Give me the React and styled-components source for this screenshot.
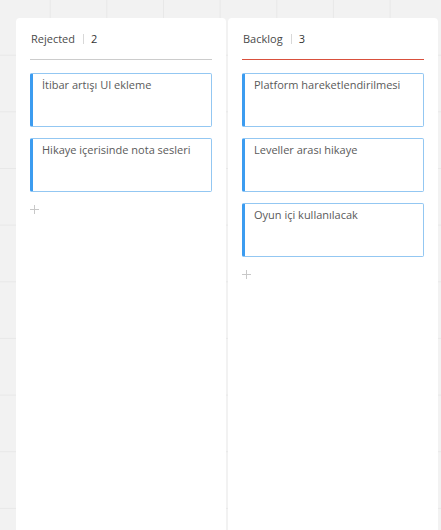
import React from "react";
import styled, { createGlobalStyle } from "styled-components";

const GlobalStyle = createGlobalStyle`
  html, body {
    margin: 0;
    padding: 0;
    height: 100%;
  }
  body {
    font-family: "Open Sans", "Noto Sans", sans-serif;
    background-color: #f2f2f2;
    background-image:
      linear-gradient(to right, #e8e8e8 1px, transparent 1px),
      linear-gradient(to bottom, #e8e8e8 1px, transparent 1px);
    background-size: 56.67px 56.67px;
    background-position: -7px -2px;
    overflow: hidden;
  }
`;

const Board = styled.div`
  display: flex;
  gap: 2px;
  padding: 18px 0 0 16px;
  height: 100vh;
  box-sizing: border-box;
`;

const Column = styled.div`
  width: 210px;
  flex: none;
  background: #ffffff;
  border-radius: 4px 4px 0 0;
  padding: 0 14px;
  box-sizing: border-box;
  display: flex;
  flex-direction: column;
`;

const Header = styled.div`
  height: 42px;
  box-sizing: border-box;
  padding-top: 0;
  display: flex;
  align-items: center;
  font-size: 11px;
  color: #4a4a4a;
  border-bottom: 1px solid ${(p) => p.$line};
  margin-bottom: 13px;
  padding-left: 1px;
`;

const Sep = styled.span`
  width: 1px;
  height: 10px;
  background: #d8d8d8;
  margin: 0 7px 0 8px;
`;

const Count = styled.span`
  color: #333;
`;

const Card = styled.div`
  height: 54px;
  box-sizing: border-box;
  border: 1px solid #93c7f2;
  border-left: 3px solid #3c9cf0;
  border-radius: 2px;
  margin-bottom: 11px;
  padding: 3px 8px 0 9px;
  font-size: 11px;
  line-height: 16px;
  color: #5a5a5a;
`;

const AddButton = styled.div`
  width: 9px;
  height: 9px;
  margin: 2px 0 0 0;
  display: flex;
`;

const Plus = () => (
  <AddButton>
    <svg width="9" height="9" viewBox="0 0 9 9">
      <path d="M4.5 0v9M0 4.5h9" stroke="#c8c8c8" strokeWidth="1" />
    </svg>
  </AddButton>
);

const columns = [
  {
    title: "Rejected",
    line: "#cccccc",
    cards: ["İtibar artışı UI ekleme", "Hikaye içerisinde nota sesleri"],
  },
  {
    title: "Backlog",
    line: "#d9503d",
    cards: [
      "Platform hareketlendirilmesi",
      "Leveller arası hikaye",
      "Oyun içi kullanılacak",
    ],
  },
];

export default function App() {
  return (
    <>
      <GlobalStyle />
      <Board>
        {columns.map((c) => (
          <Column key={c.title}>
            <Header $line={c.line}>
              {c.title}
              <Sep />
              <Count>{c.cards.length}</Count>
            </Header>
            {c.cards.map((t) => (
              <Card key={t}>{t}</Card>
            ))}
            <Plus />
          </Column>
        ))}
      </Board>
    </>
  );
}
